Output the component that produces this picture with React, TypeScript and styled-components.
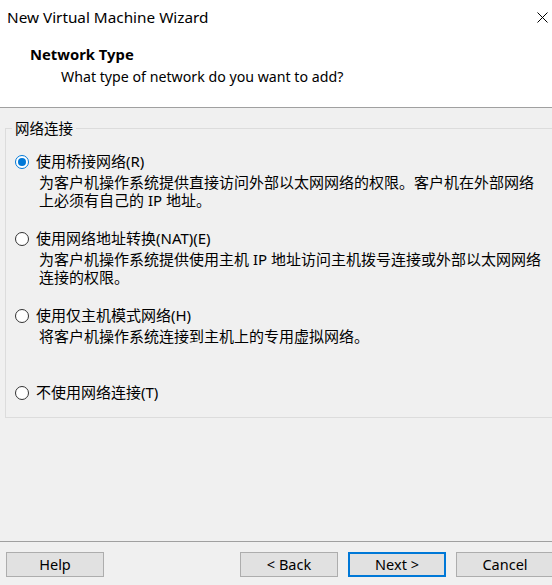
import React from "react";
import styled, { createGlobalStyle } from "styled-components";

const Global = createGlobalStyle`
  html, body { margin: 0; padding: 0; background: #f0f0f0; overflow: hidden; }
  * { box-sizing: border-box; }
`;

const FONT = `"Noto Sans", "Noto Sans CJK SC", sans-serif`;

const Window = styled.div`
  width: 552px;
  height: 585px;
  display: flex;
  flex-direction: column;
  overflow: hidden;
  font-family: ${FONT};
  color: #000;
  background: #f0f0f0;
`;

const Header = styled.header`
  height: 108px;
  background: #ffffff;
  border-bottom: 1px solid #a0a0a0;
  display: flex;
  flex-direction: column;
`;

const TitleBar = styled.div`
  height: 35px;
  display: flex;
  align-items: center;
  justify-content: space-between;
  padding: 0 0 0 7px;
`;

const Title = styled.div`
  font-size: 15.3px;
  line-height: 20px;
  margin-top: -1px;
`;

const CloseButton = styled.div`
  width: 20px;
  height: 20px;
  display: flex;
  align-items: center;
  justify-content: center;
  margin-top: -1px;
`;

const HeaderTitle = styled.div`
  font-size: 14.8px;
  font-weight: 700;
  line-height: 20px;
  padding-left: 30px;
  margin-top: 9px;
`;

const HeaderSub = styled.div`
  font-size: 14.2px;
  line-height: 20px;
  padding-left: 61px;
  margin-top: 3px;
`;

const Body = styled.main`
  flex: 1;
  padding: 0;
`;

const Group = styled.fieldset`
  margin: 12px -6px 0 5px;
  padding: 16px 0 16px 9px;
  border: 1px solid #dcdcdc;
  min-width: 0;
`;

const Legend = styled.legend`
  font-size: 14.5px;
  line-height: 17px;
  padding: 0 3px;
  margin-left: -3px;
`;

const OptionList = styled.div`
  display: flex;
  flex-direction: column;
`;

const Option = styled.div`
  min-height: 77px;
  display: flex;
  flex-direction: column;
  &:last-child { min-height: 0; }
`;

const OptionLabel = styled.label`
  display: flex;
  align-items: center;
  height: 17px;
  font-size: 15px;
  line-height: 17px;
  gap: 7px;
`;

const Radio = styled.span<{ $checked?: boolean }>`
  width: 14px;
  height: 14px;
  border-radius: 50%;
  border: 1px solid ${(p) => (p.$checked ? "#0078d7" : "#333333")};
  background: #ffffff;
  display: flex;
  align-items: center;
  justify-content: center;
  flex: none;
  &::after {
    content: "";
    width: 8px;
    height: 8px;
    border-radius: 50%;
    background: ${(p) => (p.$checked ? "#0078d7" : "transparent")};
  }
`;

const Description = styled.div`
  margin-top: 3px;
  padding-left: 24px;
  font-size: 15px;
  line-height: 18px;
  padding-right: 10px;
`;

const DescLine = styled.div`
  white-space: nowrap;
`;

const Footer = styled.footer`
  height: 44px;
  border-top: 1px solid #a0a0a0;
  width: 554px;
  display: grid;
  grid-template-columns: 98px 1fr 98px 98px 98px;
  column-gap: 10px;
  padding: 10px 0 0 6px;
  align-items: start;
`;

const Button = styled.button<{ $primary?: boolean }>`
  height: 25px;
  font-family: ${FONT};
  font-size: 14.5px;
  color: #000;
  background: #e1e1e1;
  border: ${(p) => (p.$primary ? "2px solid #0078d7" : "1px solid #adadad")};
  padding: 0;
  display: flex;
  align-items: center;
  justify-content: center;
  line-height: 1;
`;

const Spacer = styled.div``;

const options = [
  {
    label: "使用桥接网络(R)",
    desc: ["为客户机操作系统提供直接访问外部以太网网络的权限。客户机在外部网络", "上必须有自己的 IP 地址。"],
    checked: true,
  },
  {
    label: "使用网络地址转换(NAT)(E)",
    desc: ["为客户机操作系统提供使用主机 IP 地址访问主机拨号连接或外部以太网网络", "连接的权限。"],
  },
  {
    label: "使用仅主机模式网络(H)",
    desc: ["将客户机操作系统连接到主机上的专用虚拟网络。"],
  },
  { label: "不使用网络连接(T)", desc: [] as string[] },
];

export default function App() {
  return (
    <>
      <Global />
      <Window>
        <Header>
          <TitleBar>
            <Title>New Virtual Machine Wizard</Title>
            <CloseButton>
              <svg width="11" height="11" viewBox="0 0 11 11">
                <path d="M0.5 0.5 L10.5 10.5 M10.5 0.5 L0.5 10.5" stroke="#000" strokeWidth="1" fill="none" />
              </svg>
            </CloseButton>
          </TitleBar>
          <HeaderTitle>Network Type</HeaderTitle>
          <HeaderSub>What type of network do you want to add?</HeaderSub>
        </Header>
        <Body>
          <Group>
            <Legend>网络连接</Legend>
            <OptionList>
              {options.map((o) => (
                <Option key={o.label}>
                  <OptionLabel>
                    <Radio $checked={o.checked} />
                    {o.label}
                  </OptionLabel>
                  {o.desc.length > 0 && (
                    <Description>
                      {o.desc.map((d) => (
                        <DescLine key={d}>{d}</DescLine>
                      ))}
                    </Description>
                  )}
                </Option>
              ))}
            </OptionList>
          </Group>
        </Body>
        <Footer>
          <Button>Help</Button>
          <Spacer />
          <Button>&lt; Back</Button>
          <Button $primary>Next &gt;</Button>
          <Button>Cancel</Button>
        </Footer>
      </Window>
    </>
  );
}
